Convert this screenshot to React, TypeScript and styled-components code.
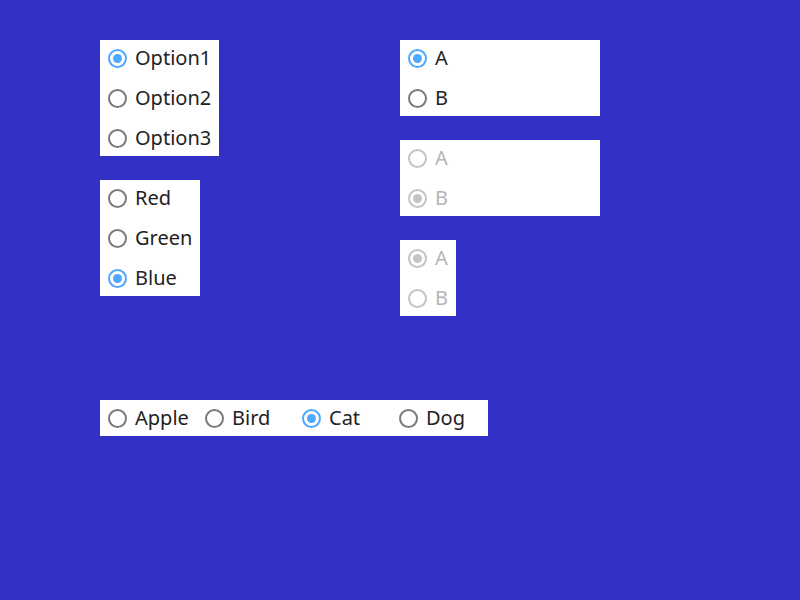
import React, { useState } from "react";
import styled, { createGlobalStyle, css } from "styled-components";

const GlobalStyle = createGlobalStyle`
  html, body {
    margin: 0;
    padding: 0;
    background: #3330c8;
    font-family: "Noto Sans", "Open Sans", sans-serif;
  }
`;

type Item = { label: string; value: string };

const Page = styled.div`
  width: 800px;
  height: 600px;
  padding: 40px 0 0 100px;
  box-sizing: border-box;
  display: grid;
  grid-template-columns: 300px 200px;
  align-content: start;
  row-gap: 84px;
`;

const Column = styled.div`
  display: flex;
  flex-direction: column;
  align-items: flex-start;
  gap: 24px;
`;

const Bottom = styled.div`
  grid-column: 1 / 3;
  display: flex;
  align-items: flex-start;
`;

const Group = styled.div<{ $row?: boolean; $width?: number }>`
  background: #fff;
  display: flex;
  flex-direction: ${(p) => (p.$row ? "row" : "column")};
  gap: ${(p) => (p.$row ? "0" : "4px")};
  padding-right: ${(p) => (p.$row ? "0" : "8px")};
  ${(p) => p.$width && css`width: ${p.$width}px; box-sizing: border-box;`}
`;

const Option = styled.label<{ $disabled?: boolean; $fixed?: boolean }>`
  display: flex;
  align-items: center;
  height: 36px;
  padding-left: 8px;
  gap: 8px;
  font-size: 20px;
  color: ${(p) => (p.$disabled ? "#b5b5b5" : "#222")};
  cursor: ${(p) => (p.$disabled ? "default" : "pointer")};
  ${(p) => p.$fixed && css`width: 97px; box-sizing: border-box;`}
`;

const Text = styled.span`
  margin-bottom: 2px;
`;

const Circle = styled.span<{ $checked: boolean; $disabled?: boolean }>`
  width: 19px;
  height: 19px;
  box-sizing: border-box;
  border-radius: 50%;
  border: 2px solid
    ${(p) => (p.$disabled ? "#c4c4c4" : p.$checked ? "#4ea8ff" : "#7a7a7a")};
  display: flex;
  align-items: center;
  justify-content: center;
  flex-shrink: 0;
  &::after {
    content: "";
    display: ${(p) => (p.$checked ? "block" : "none")};
    width: 9px;
    height: 9px;
    border-radius: 50%;
    background: ${(p) => (p.$disabled ? "#c4c4c4" : "#4ea8ff")};
  }
`;

type GroupProps = {
  items: Item[];
  initial: string;
  disabled?: boolean;
  row?: boolean;
  width?: number;
};

const RadioGroup = ({ items, initial, disabled, row, width }: GroupProps) => {
  const [value, setValue] = useState(initial);
  return (
    <Group $row={row} $width={width}>
      {items.map((it) => (
        <Option
          key={it.value}
          $disabled={disabled}
          $fixed={row}
          onClick={() => !disabled && setValue(it.value)}
        >
          <Circle $checked={value === it.value} $disabled={disabled} />
          <Text>{it.label}</Text>
        </Option>
      ))}
    </Group>
  );
};

const opts = (...labels: string[]) => labels.map((l) => ({ label: l, value: l }));

export default function App() {
  return (
    <>
      <GlobalStyle />
      <Page>
        <Column>
          <RadioGroup items={opts("Option1", "Option2", "Option3")} initial="Option1" />
          <RadioGroup items={opts("Red", "Green", "Blue")} initial="Blue" />
        </Column>
        <Column>
          <RadioGroup items={opts("A", "B")} initial="A" width={200} />
          <RadioGroup items={opts("A", "B")} initial="B" width={200} disabled />
          <RadioGroup items={opts("A", "B")} initial="A" disabled />
        </Column>
        <Bottom>
          <RadioGroup items={opts("Apple", "Bird", "Cat", "Dog")} initial="Cat" row />
        </Bottom>
      </Page>
    </>
  );
}
